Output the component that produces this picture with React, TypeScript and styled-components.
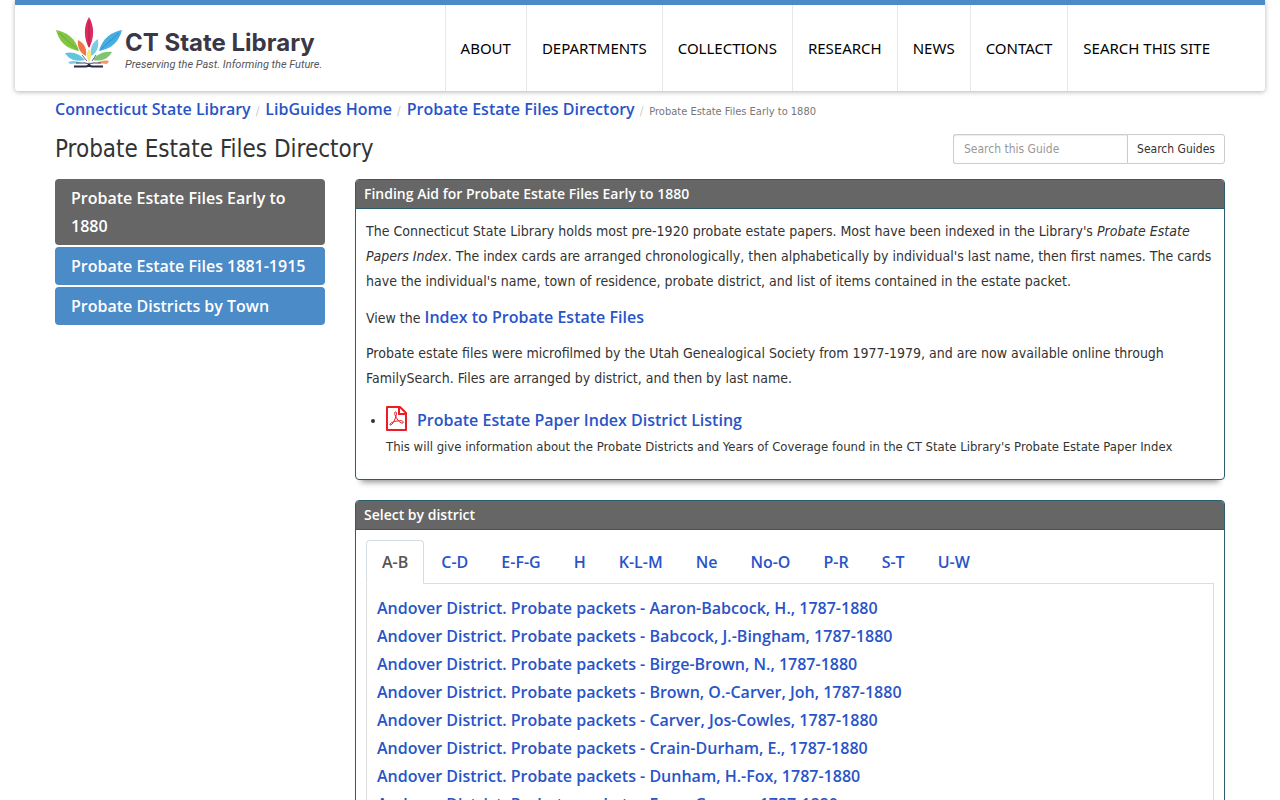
import React from "react";
import styled, { createGlobalStyle, css } from "styled-components";

const textFont = '"Trebuchet MS", "DejaVu Sans Condensed", sans-serif';
const linkFont = '"Trebuchet MS", "Open Sans", sans-serif';
const blue = "#4b8bc8";
const linkBlue = "#2954c8";
const grey = "#666666";
const boxBorder = "#2b5d6e";

const GlobalStyle = createGlobalStyle`
  *, *::before, *::after { box-sizing: border-box; }
  body {
    margin: 0;
    background: #fff;
    color: #333;
    font-family: ${textFont};
    font-size: 14px;
    line-height: 25px;
  }
`;

const Link = styled.a`
  color: ${linkBlue};
  font-family: ${linkFont};
  font-size: 16px;
  font-weight: 600;
  text-decoration: none;
`;

const Header = styled.header`
  margin: 0 15px;
  padding: 0 40px;
  border-top: 5px solid ${blue};
  border-radius: 0 0 3px 3px;
  background: #fff;
  box-shadow: 0 1px 5px rgba(0, 0, 0, 0.3);
`;

const HeaderInner = styled.div`
  display: flex;
  justify-content: space-between;
  max-width: 1170px;
  margin: 0 auto;
`;

const LogoLink = styled.a`
  display: flex;
  align-items: flex-start;
  gap: 3px;
  padding-top: 10px;
  color: #3a3746;
  text-decoration: none;
`;

const LogoText = styled.span`
  display: flex;
  flex-direction: column;
  padding-top: 14px;
`;

const LogoName = styled.span`
  font: 700 24px/28px Inter, sans-serif;
`;

const LogoTagline = styled.span`
  color: #55555c;
  font: italic 400 11px/16px Roboto, sans-serif;
`;

const MainNav = styled.nav`
  display: flex;
`;

const MainNavLink = styled.a`
  padding: 0 15px;
  border-left: 1px solid #e7e7e7;
  color: #000;
  font: 400 15px/86px "Noto Sans", sans-serif;
  text-decoration: none;
  white-space: nowrap;
`;

const Page = styled.main`
  max-width: 1170px;
  margin: 0 auto;
`;

const Breadcrumbs = styled.ol`
  display: flex;
  align-items: baseline;
  margin: 0;
  padding: 4px 0 0;
  list-style: none;
  line-height: 28px;
`;

const Crumb = styled.li`
  color: #777;
  font-size: 11px;

  & + &::before {
    content: "/";
    padding: 0 6px 0 5px;
    color: #ccc;
    font-size: 12px;
  }
`;

const TitleRow = styled.div`
  display: flex;
  justify-content: space-between;
  align-items: center;
  margin: 8px 0 15px;
`;

const Title = styled.h1`
  margin: 0;
  font-size: 24px;
  font-weight: 400;
  line-height: 30px;
`;

const SearchForm = styled.form`
  display: flex;
  height: 30px;
`;

const SearchInput = styled.input`
  width: 174px;
  padding: 5px 10px;
  border: 1px solid #ccc;
  border-right: 0;
  border-radius: 3px 0 0 3px;
  box-shadow: inset 0 1px 1px rgba(0, 0, 0, 0.08);
  font: 400 12px/18px ${textFont};

  &::placeholder {
    color: #999;
  }
`;

const SearchButton = styled.button`
  width: 98px;
  padding: 0;
  border: 1px solid #ccc;
  border-radius: 0 3px 3px 0;
  background: #fff;
  color: #333;
  font: 400 12px/18px ${textFont};
  white-space: nowrap;
`;

const Columns = styled.div`
  display: flex;
  align-items: flex-start;
  gap: 30px;
`;

const SideNav = styled.nav`
  display: flex;
  flex: 0 0 270px;
  flex-direction: column;
  gap: 2px;
`;

const SideLink = styled.a<{ $active?: boolean }>`
  padding: 5px 16px;
  border-radius: 4px;
  background: ${(p) => (p.$active ? grey : blue)};
  color: #fff;
  font: 600 16px/28px ${linkFont};
  text-decoration: none;
`;

const Content = styled.div`
  flex: 1;
  min-width: 0;
`;

const Box = styled.section`
  margin-bottom: 20px;
  border: 1px solid ${boxBorder};
  border-radius: 4px;
  background: #fff;
  box-shadow: 0 8px 6px -6px rgba(0, 0, 0, 0.45);
`;

const BoxTitle = styled.h2`
  margin: 0;
  padding: 0 8px;
  border-bottom: 1px solid ${boxBorder};
  border-radius: 3px 3px 0 0;
  background: ${grey};
  color: #fff;
  font: 600 14px/28px ${linkFont};
`;

const BoxBody = styled.div`
  padding: 10px 10px 20px;
`;

const Paragraph = styled.p<{ $tall?: boolean }>`
  margin: 0 0 10px;
  ${(p) =>
    p.$tall &&
    css`
      line-height: 26px;
    `}
`;

const FileList = styled.ul`
  margin: 0;
  padding: 5px 0 0 20px;
  line-height: 28px;
`;

const FileLink = styled(Link)`
  display: inline-flex;
  align-items: flex-start;
  gap: 10px;
  vertical-align: top;
`;

const FileNote = styled.div`
  font-size: 13px;
  line-height: 25px;
`;

const TabList = styled.div`
  display: flex;
  gap: 1px;
  border-bottom: 1px solid #ddd;
`;

const Tab = styled.button<{ $active?: boolean }>`
  margin-bottom: -1px;
  padding: 7px 15px;
  border: 1px solid ${(p) => (p.$active ? "#d6dde2" : "transparent")};
  border-bottom-color: ${(p) => (p.$active ? "#fff" : "transparent")};
  border-radius: 4px 4px 0 0;
  background: ${(p) => (p.$active ? "#fff" : "transparent")};
  color: ${(p) => (p.$active ? "#555" : linkBlue)};
  font: 600 16px/28px ${linkFont};
`;

const TabPanel = styled.ul`
  margin: 0;
  padding: 10px;
  border: 1px solid #ddd;
  border-top: 0;
  list-style: none;
  line-height: 28px;
`;

const PanelItem = styled.li`
  height: 28px;
`;

const LeafLogo = () => (
  <svg width="67" height="56" viewBox="0 0 67 56" aria-hidden="true">
    <path d="M34 2C39.500 11 39.500 23 34 33C28.500 23 28.500 11 34 2Z" fill="#d92b5f" />
    <path d="M34 6V32" stroke="#b3224f" strokeWidth="1" fill="none" />
    <path d="M1 15C12 17 21 24 24 36C12 34 4 27 1 15Z" fill="#82c543" />
    <path d="M4 18L23 35" stroke="#62ad3c" strokeWidth="1" fill="none" />
    <path d="M67 15C56 17 47 24 44 36C56 34 64 27 67 15Z" fill="#45aee3" />
    <path d="M64 18L45 35" stroke="#2f8cc6" strokeWidth="1" fill="none" />
    <path d="M23 25C29 28 32 33 31 41C25 38 22 32 23 25Z" fill="#f0764a" />
    <path d="M43 24C37 28 35 33 36 41C42 38 44 32 43 24Z" fill="#7ccbe3" />
    <path d="M10 38C18 36 25 39 30 45C22 47 14 45 10 38Z" fill="#62c5dd" />
    <path d="M57 37C49 36 42 39 38 45C46 47 53 44 57 37Z" fill="#7fc571" />
    <path d="M34 34C37 38 37 42 34 47C31 42 31 38 34 34Z" fill="#f0ea78" />
    <path d="M13 47C18 45 23 46 26 48L15 49Z" fill="#7ccfe2" />
    <path d="M54 46C49 45 45 46 42 48L52 49Z" fill="#ef9a62" />
    <path d="M27 40L32 46M41 40L37 46" stroke="#5a6f9c" strokeWidth="1" fill="none" />
    <path d="M21 48H30Q33 48 34 50Q35 48 38 48H46" stroke="#3d4467" strokeWidth="1" fill="none" />
    <path d="M19 51.500H31Q33 51.500 34 49.500Q35 51.500 37 51.500H48" stroke="#262b4a" strokeWidth="2" fill="none" />
  </svg>
);

const PdfIcon = () => (
  <svg width="21" height="25" viewBox="0 0 21 25" fill="none" stroke="#ee1c25" aria-hidden="true">
    <path d="M1 1H14L20 7V24H1Z" strokeWidth="2" strokeLinejoin="round" />
    <path d="M13 1V8H20" strokeWidth="2" />
    <path
      d="M9 6C11 5 11 9 9 13C8 16 5 20 4 19C3 18 7 15 12 15C15 14 18 15 17 17C15 18 11 14 9.500 10C8.500 8 8.500 7 9 6Z"
      strokeWidth="1"
    />
  </svg>
);

const navItems = ["ABOUT", "DEPARTMENTS", "COLLECTIONS", "RESEARCH", "NEWS", "CONTACT", "SEARCH THIS SITE"];
const crumbs = ["Connecticut State Library", "LibGuides Home", "Probate Estate Files Directory"];
const guidePages = ["Probate Estate Files Early to 1880", "Probate Estate Files 1881-1915", "Probate Districts by Town"];
const tabs = ["A-B", "C-D", "E-F-G", "H", "K-L-M", "Ne", "No-O", "P-R", "S-T", "U-W"];
const packets = [
  "Aaron-Babcock, H.",
  "Babcock, J.-Bingham",
  "Birge-Brown, N.",
  "Brown, O.-Carver, Joh",
  "Carver, Jos-Cowles",
  "Crain-Durham, E.",
  "Dunham, H.-Fox",
  "Frary-Greene",
];

export default function App() {
  return (
    <>
      <GlobalStyle />
      <Header>
        <HeaderInner>
          <LogoLink href="#home">
            <LeafLogo />
            <LogoText>
              <LogoName>CT State Library</LogoName>
              <LogoTagline>Preserving the Past. Informing the Future.</LogoTagline>
            </LogoText>
          </LogoLink>
          <MainNav aria-label="Main">
            {navItems.map((item) => (
              <MainNavLink key={item} href="#menu">
                {item}
              </MainNavLink>
            ))}
          </MainNav>
        </HeaderInner>
      </Header>
      <Page>
        <Breadcrumbs>
          {crumbs.map((crumb) => (
            <Crumb key={crumb}>
              <Link href="#crumb">{crumb}</Link>
            </Crumb>
          ))}
          <Crumb>Probate Estate Files Early to 1880</Crumb>
        </Breadcrumbs>
        <TitleRow>
          <Title>Probate Estate Files Directory</Title>
          <SearchForm role="search">
            <SearchInput type="text" placeholder="Search this Guide" aria-label="Search this Guide" />
            <SearchButton type="submit">Search Guides</SearchButton>
          </SearchForm>
        </TitleRow>
        <Columns>
          <SideNav aria-label="Guide pages">
            {guidePages.map((page, i) => (
              <SideLink key={page} href="#page" $active={i === 0}>
                {page}
              </SideLink>
            ))}
          </SideNav>
          <Content>
            <Box>
              <BoxTitle>Finding Aid for Probate Estate Files Early to 1880</BoxTitle>
              <BoxBody>
                <Paragraph>
                  The Connecticut State Library holds most pre-1920 probate estate papers. Most have been indexed in
                  the Library's <em>Probate Estate Papers Index</em>. The index cards are arranged chronologically,
                  then alphabetically by individual's last name, then first names. The cards have the individual's
                  name, town of residence, probate district, and list of items contained in the estate packet.
                </Paragraph>
                <Paragraph $tall>
                  View the <Link href="#index">Index to Probate Estate Files</Link>
                </Paragraph>
                <Paragraph>
                  Probate estate files were microfilmed by the Utah Genealogical Society from 1977-1979, and are now
                  available online through FamilySearch. Files are arranged by district, and then by last name.
                </Paragraph>
                <FileList>
                  <li>
                    <FileLink href="#listing">
                      <PdfIcon />
                      Probate Estate Paper Index District Listing
                    </FileLink>
                    <FileNote>
                      This will give information about the Probate Districts and Years of Coverage found in the CT
                      State Library's Probate Estate Paper Index
                    </FileNote>
                  </li>
                </FileList>
              </BoxBody>
            </Box>
            <Box>
              <BoxTitle>Select by district</BoxTitle>
              <BoxBody>
                <TabList role="tablist">
                  {tabs.map((tab, i) => (
                    <Tab key={tab} type="button" role="tab" aria-selected={i === 0} $active={i === 0}>
                      {tab}
                    </Tab>
                  ))}
                </TabList>
                <TabPanel>
                  {packets.map((packet) => (
                    <PanelItem key={packet}>
                      <Link href="#packet">Andover District. Probate packets - {packet}, 1787-1880</Link>
                    </PanelItem>
                  ))}
                </TabPanel>
              </BoxBody>
            </Box>
          </Content>
        </Columns>
      </Page>
    </>
  );
}
